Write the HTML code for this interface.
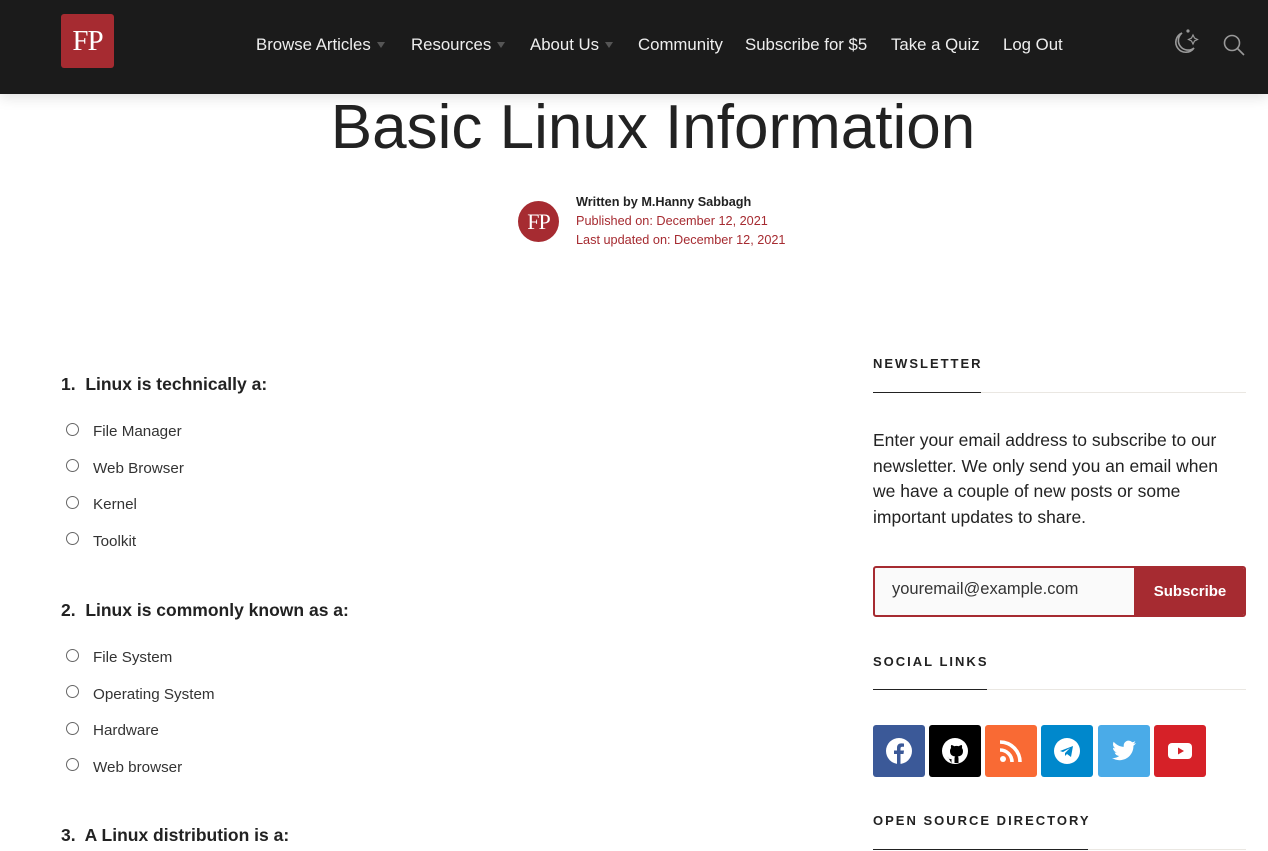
<!DOCTYPE html>
<html><head><meta charset="utf-8"><style>
*{margin:0;padding:0;box-sizing:border-box}
body{width:1268px;height:851px;overflow:hidden;background:#fff;font-family:"Liberation Sans",sans-serif;color:#222;position:relative}
.a{position:absolute;white-space:nowrap}
header{position:absolute;left:0;top:0;width:1268px;height:94px;background:#1b1b1b;box-shadow:0 2px 14px rgba(0,0,0,.15)}
.logo{left:61px;top:14px;width:53px;height:54px;background:#a62b31;border-radius:3px;color:#fff;font-family:"Liberation Serif",serif;font-size:29px;text-align:center;line-height:54px;letter-spacing:-1px}
.nav{top:35px;color:#eee;font-size:16.8px}
.tri{display:inline-block;width:0;height:0;border-left:4.5px solid transparent;border-right:4.5px solid transparent;border-top:6px solid #555;margin-left:6px;vertical-align:2px}
h1{position:absolute;left:0;width:1306px;text-align:center;top:92px;font-weight:400;font-size:62px;color:#222}
.av{left:518px;top:201px;width:41px;height:41px;border-radius:50%;background:#a62b31;color:#fff;font-family:"Liberation Serif",serif;font-size:22px;text-align:center;line-height:41px;letter-spacing:-1px}
.m{left:576px;font-size:12.7px;color:#a62b31}
.q{left:61px;font-size:17.5px;font-weight:700;color:#222}
.o{left:93px;font-size:15.2px;color:#333}
.r{left:66px;width:13px;height:13px;border:1px solid #666;border-radius:50%}
.wh{left:873px;font-size:13px;font-weight:700;letter-spacing:2px;color:#222}
.ln{left:873px;width:373px;height:1px;background:#eae7e2}
.lk{left:873px;height:1px;background:#222}
.s{top:725px;width:52px;height:52px;border-radius:3px}
.s svg{position:absolute;left:12px;top:12px;width:28px;height:28px}
</style></head><body>
<header>
<div class="a logo">FP</div>
<div class="a nav" style="left:256px">Browse Articles<span class="tri"></span></div>
<div class="a nav" style="left:411px">Resources<span class="tri"></span></div>
<div class="a nav" style="left:530px">About Us<span class="tri"></span></div>
<div class="a nav" style="left:638px">Community</div>
<div class="a nav" style="left:745px">Subscribe for $5</div>
<div class="a nav" style="left:891px">Take a Quiz</div>
<div class="a nav" style="left:1003px">Log Out</div>
<svg class="a" style="left:1170px;top:28px" width="32" height="30" viewBox="0 0 32 30" fill="none" stroke="#999" stroke-width="1.6"><path d="M12 5 A10 10 0 1 0 24 20 A9 9 0 0 1 12 5Z"/><path d="M23 7 l1.5 3 3 1.5 -3 1.5 -1.5 3 -1.5 -3 -3 -1.5 3 -1.5z" stroke-width="1.2"/><circle cx="18" cy="3" r=".8" fill="#999"/></svg>
<svg class="a" style="left:1222px;top:33px" width="24" height="24" viewBox="0 0 24 24" fill="none" stroke="#999" stroke-width="1.6"><circle cx="10" cy="10" r="7.5"/><path d="M15.5 15.5 L22 22"/></svg>
</header>
<h1>Basic Linux Information</h1>
<div class="a av">FP</div>
<div class="a m" style="top:195px;color:#222;font-weight:700">Written by M.Hanny Sabbagh</div>
<div class="a m" style="top:214px">Published on: December 12, 2021</div>
<div class="a m" style="top:233px">Last updated on: December 12, 2021</div>

<div class="a q" style="top:374px">1.&nbsp; Linux is technically a:</div>
<div class="a r" style="top:423px"></div><div class="a o" style="top:423px">File Manager</div>
<div class="a r" style="top:459px"></div><div class="a o" style="top:460px">Web Browser</div>
<div class="a r" style="top:496px"></div><div class="a o" style="top:496px">Kernel</div>
<div class="a r" style="top:532px"></div><div class="a o" style="top:533px">Toolkit</div>
<div class="a q" style="top:600px">2.&nbsp; Linux is commonly known as a:</div>
<div class="a r" style="top:649px"></div><div class="a o" style="top:649px">File System</div>
<div class="a r" style="top:685px"></div><div class="a o" style="top:686px">Operating System</div>
<div class="a r" style="top:722px"></div><div class="a o" style="top:722px">Hardware</div>
<div class="a r" style="top:758px"></div><div class="a o" style="top:759px">Web browser</div>
<div class="a q" style="top:825px">3.&nbsp; A Linux distribution is a:</div>

<div class="a wh" style="top:356px">NEWSLETTER</div>
<div class="a ln" style="top:392px"></div><div class="a lk" style="top:392px;width:108px"></div>
<div class="a" style="left:873px;top:428px;font-size:17.5px;line-height:25.7px;color:#222;white-space:normal;width:362px">Enter your email address to subscribe to our newsletter. We only send you an email when we have a couple of new posts or some important updates to share.</div>
<div class="a" style="left:873px;top:566px;width:373px;height:51px;border:2px solid #a62b31;border-radius:3px;background:#fafafa;overflow:hidden">
<div class="a" style="left:17px;top:12px;font-size:16.5px;color:#333">youremail@example.com</div>
<div class="a" style="left:259px;top:0;width:112px;height:47px;background:#a62b31;color:#fff;font-weight:700;font-size:15px;text-align:center;line-height:47px">Subscribe</div>
</div>
<div class="a wh" style="top:654px">SOCIAL LINKS</div>
<div class="a ln" style="top:689px"></div><div class="a lk" style="top:689px;width:114px"></div>
<div class="a s" style="left:873px;background:#3b5998"><svg viewBox="0 0 28 28"><circle cx="14" cy="14" r="13" fill="#fff"/><path d="M15.5 27V17h3l.5-3.5h-3.5v-2c0-1 .4-1.8 1.8-1.8H19V6.6c-.4 0-1.5-.2-2.7-.2-2.6 0-4.3 1.6-4.3 4.5v2.6H9V17h3v10z" fill="#3b5998"/></svg></div>
<div class="a s" style="left:929px;background:#000"><svg viewBox="0 0 28 28"><circle cx="14" cy="14" r="13" fill="#fff"/><path d="M10.5 26v-4c-3 .5-3.5-1.5-4-2.5M17.5 26v-4.5c0-1-.3-1.6-.8-2 3-.3 5.3-1.6 5.3-5.5 0-1.2-.4-2.2-1.1-3 .2-.6.4-1.6-.1-3-1 0-2 .5-3 1.2-1.5-.4-3.1-.4-4.600 0-1-.7-2-1.2-3-1.2-.5 1.4-.3 2.4-.1 3-.7.8-1.1 1.8-1.1 3 0 3.9 2.3 5.2 5.3 5.5-.5.4-.8 1-.8 2V26z" fill="#000"/></svg></div>
<div class="a s" style="left:985px;background:#f96a34"><svg viewBox="0 0 28 28" fill="none" stroke="#fff" stroke-width="3.6"><circle cx="6" cy="22" r="3" fill="#fff" stroke="none"/><path d="M3 13a12 12 0 0 1 12 12"/><path d="M3 5a20 20 0 0 1 20 20"/></svg></div>
<div class="a s" style="left:1041px;background:#0088cc"><svg viewBox="0 0 28 28"><circle cx="14" cy="14" r="13" fill="#fff"/><path d="M7 14l13-5-2 11-4-3-2 2v-3l5-5-7 4z" fill="#0088cc"/></svg></div>
<div class="a s" style="left:1098px;background:#4aabe8"><svg viewBox="0 0 28 28"><path d="M26 6c-.9.4-1.8.6-2.8.8 1-.6 1.8-1.6 2.1-2.7-1 .6-2 1-3.1 1.2a4.9 4.9 0 0 0-8.4 4.5C9.7 9.6 6.1 7.7 3.7 4.7c-1.3 2.3-.6 5.1 1.5 6.5-.8 0-1.5-.2-2.2-.6 0 2.4 1.7 4.4 3.9 4.8-.7.2-1.5.2-2.2.1.6 2 2.4 3.4 4.6 3.4A9.8 9.8 0 0 1 2 21c2.2 1.4 4.8 2.2 7.5 2.2 9.1 0 14.2-7.6 13.9-14.4 1-.7 1.8-1.6 2.6-2.8z" fill="#fff"/></svg></div>
<div class="a s" style="left:1154px;background:#d62128"><svg viewBox="0 0 28 28"><rect x="2" y="6" width="24" height="16" rx="4" fill="#fff"/><path d="M12 10.5v7l6-3.5z" fill="#d62128"/></svg></div>
<div class="a wh" style="top:813px">OPEN SOURCE DIRECTORY</div>
<div class="a ln" style="top:849px"></div><div class="a lk" style="top:849px;width:215px"></div>
</body></html>
